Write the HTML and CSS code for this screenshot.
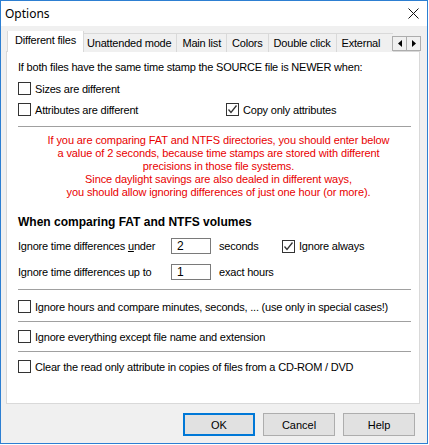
FILE: index.html
```html
<!DOCTYPE html>
<html lang="en">
<head>
    <meta charset="UTF-8">
    <title>Options</title>
    <link rel="stylesheet" href="styles.css">
</head>
<body>
<div class="window">
    <div class="titlebar">
        <span class="title">Options</span>
        <svg class="close" width="11" height="11" viewBox="0 0 11 11">
            <path d="M0.5 0.5 L10.5 10.5 M10.5 0.5 L0.5 10.5" stroke="#111" stroke-width="1" fill="none"/>
        </svg>
    </div>

    <div class="dialog">
        <div class="tabs">
            <div class="tab-strip">
                <div class="tab active">Different files</div>
                <div class="tab">Unattended mode</div>
                <div class="tab">Main list</div>
                <div class="tab">Colors</div>
                <div class="tab">Double click</div>
                <div class="tab last">External</div>
            </div>
            <div class="tab-arrows">
                <span class="arrow"><svg width="4" height="7" viewBox="0 0 4 7"><path d="M4 0 L0 3.5 L4 7 Z" fill="#000"/></svg></span>
                <span class="arrow"><svg width="4" height="7" viewBox="0 0 4 7"><path d="M0 0 L4 3.5 L0 7 Z" fill="#000"/></svg></span>
            </div>
        </div>

        <div class="panel">
            <p class="intro">If both files have the same time stamp the SOURCE file is NEWER when:</p>
            <div class="check-row">
                <label class="check"><span class="box"></span>Sizes are different</label>
            </div>
            <div class="check-row">
                <label class="check attr-col"><span class="box"></span>Attributes are different</label>
                <label class="check"><span class="box checked"><svg width="11" height="11" viewBox="0 0 11 11"><path d="M1.5 5.5 L4 8.5 L9.5 1.5" stroke="#333" stroke-width="1.3" fill="none"/></svg></span>Copy only attributes</label>
            </div>

            <hr class="sep">

            <div class="warning">
                If you are comparing FAT and NTFS directories, you should enter below<br>
                a value of 2 seconds, because time stamps are stored with different<br>
                precisions in those file systems.<br>
                Since daylight savings are also dealed in different ways,<br>
                you should allow ignoring differences of just one hour (or more).
            </div>

            <h4 class="group-title">When comparing FAT and NTFS volumes</h4>
            <div class="time-grid">
                <span>Ignore time differences <u>u</u>nder</span>
                <span class="field">2</span>
                <span>seconds</span>
                <label class="check"><span class="box checked"><svg width="11" height="11" viewBox="0 0 11 11"><path d="M1.5 5.5 L4 8.5 L9.5 1.5" stroke="#333" stroke-width="1.3" fill="none"/></svg></span>Ignore always</label>

                <span>Ignore time differences up to</span>
                <span class="field">1</span>
                <span>exact hours</span>
                <span></span>
            </div>

            <hr class="sep sep-low">
            <div class="option-row first">
                <label class="check"><span class="box"></span>Ignore hours and compare minutes, seconds, ... (use only in special cases!)</label>
            </div>
            <hr class="sep">
            <div class="option-row">
                <label class="check"><span class="box"></span>Ignore everything except file name and extension</label>
            </div>
            <hr class="sep">
            <div class="option-row">
                <label class="check"><span class="box"></span>Clear the read only attribute in copies of files from a CD-ROM / DVD</label>
            </div>
        </div>

        <div class="buttons">
            <button class="btn default">OK</button>
            <button class="btn">Cancel</button>
            <button class="btn">Help</button>
        </div>
    </div>
</div>
</body>
</html>
```

FILE: styles.css
```css
body {
    margin: 0;
    background: #fff;
    font-family: "Liberation Sans", Arial, sans-serif;
    font-size: 11px;
    letter-spacing: -0.2px;
    color: #000;
}
.window {
    width: 428px;
    height: 444px;
    box-sizing: border-box;
    border: 1px solid #2d7fd2;
    background: #f0f0f0;
    display: flex;
    flex-direction: column;
}
.titlebar {
    height: 25px;
    flex: none;
    background: #fff;
    display: flex;
    align-items: center;
    justify-content: space-between;
    padding: 0 8px 0 4px;
}
.title {
    font-family: "Noto Sans", sans-serif;
    font-size: 12px;
    letter-spacing: 0;
    color: #000;
}
.close {
    display: block;
}
.dialog {
    flex: 1;
    padding: 5px 7px 0 5px;
}

/* tabs */
.tabs {
    display: flex;
    height: 21px;
    margin-bottom: -1px;
    position: relative;
    z-index: 1;
}
.tab-strip {
    flex: 1;
    min-width: 0;
    display: flex;
    align-items: flex-end;
    overflow: hidden;
    padding-left: 3px;
}
.tab {
    flex: none;
    height: 18px;
    line-height: 18px;
    padding: 0 5px;
    border: 1px solid #d9d9d9;
    border-bottom: none;
    margin-right: -1px;
    background: #f0f0f0;
    white-space: nowrap;
}
.tab.active {
    height: 21px;
    line-height: 19px;
    padding: 0 7px;
    margin: 0 -3px 0 -2px;
    background: #fff;
    position: relative;
    z-index: 2;
}
.tab.last {
    flex: 1;
    padding-right: 0;
    border-right: none;
}
.tab-arrows {
    flex: none;
    display: flex;
    align-self: flex-end;
    margin: 0 -1px 1px 0;
}
.arrow {
    width: 13px;
    height: 13px;
    border: 1px solid #adadad;
    margin-left: -1px;
    background: #f0f0f0;
    display: flex;
    align-items: center;
    justify-content: center;
}

/* panel */
.panel {
    height: 353px;
    box-sizing: border-box;
    background: #fff;
    border: 1px solid #d9d9d9;
    padding: 9px 8px 0 11px;
}
.intro {
    margin: 0;
    line-height: 13px;
}
.check-row {
    display: flex;
    align-items: center;
    height: 21px;
}
.check-row:first-of-type {
    margin-top: 4px;
}
.attr-col {
    width: 208px;
}
.check {
    display: flex;
    align-items: center;
    gap: 4px;
    white-space: nowrap;
}
.box {
    width: 11px;
    height: 11px;
    border: 1px solid #333;
    background: #fff;
    flex: none;
    display: flex;
    align-items: center;
    justify-content: center;
}
.sep {
    margin: 6px 0 0;
    border: none;
    border-top: 1px solid #a0a0a0;
    height: 0;
}
.warning {
    margin-top: 7px;
    padding-left: 8px;
    text-align: center;
    color: #e80000;
    letter-spacing: -0.1px;
    line-height: 13px;
}
.group-title {
    margin: 16px 0 0;
    font-size: 12px;
    line-height: 14px;
    letter-spacing: 0;
    font-weight: bold;
}
.time-grid {
    display: grid;
    grid-template-columns: 153px 40px 71px auto;
    grid-auto-rows: 22px;
    row-gap: 4px;
    align-items: center;
    margin-top: 6px;
}
.time-grid > span:nth-child(3), .time-grid > span:nth-child(7) {
    padding-left: 8px;
}
.field {
    height: 16px;
    box-sizing: border-box;
    border: 1px solid #7a7a7a;
    padding-left: 5px;
    font-size: 12px;
    line-height: 14px;
}
.sep-low {
    margin-top: 6px;
}
.option-row {
    height: 29px;
    display: flex;
    align-items: center;
}
.option-row.first {
    margin-top: 2px;
}
.option-row + .sep {
    margin-top: 0;
}

/* buttons */
.buttons {
    display: flex;
    justify-content: flex-end;
    gap: 8px;
    margin-top: 9px;
    padding-right: 5px;
}
.btn {
    width: 72px;
    height: 23px;
    box-sizing: border-box;
    background: #e1e1e1;
    border: 1px solid #adadad;
    font-family: "Liberation Sans", Arial, sans-serif;
    font-size: 11px;
    color: #000;
    padding: 0;
}
.btn.default {
    border: 2px solid #0078d7;
}
```
